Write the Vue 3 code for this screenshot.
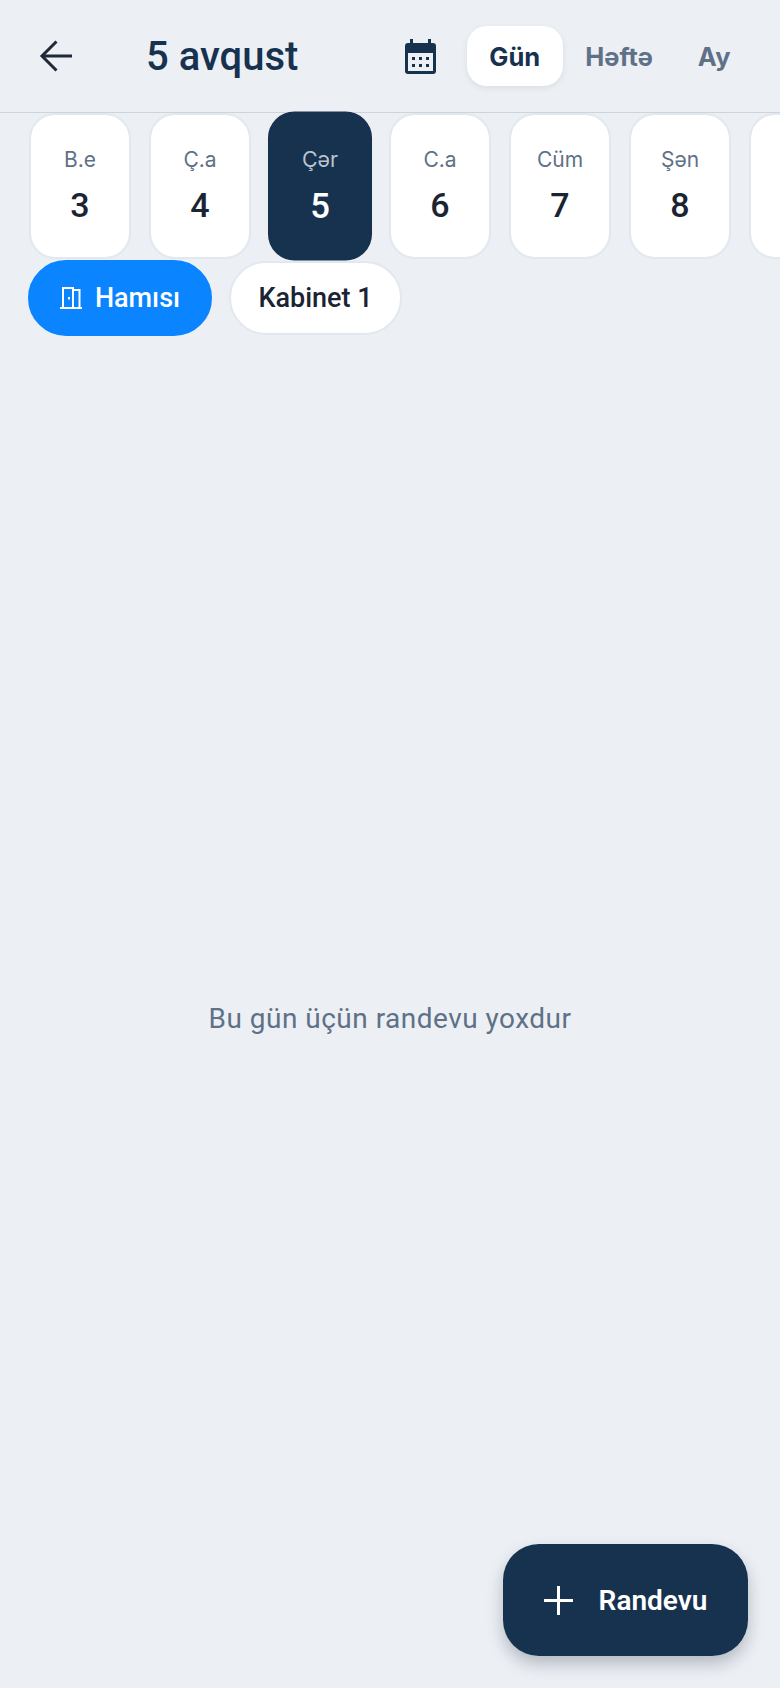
<script setup>
const days = [
  { label: 'B.e', num: 3 },
  { label: 'Ç.a', num: 4 },
  { label: 'Çər', num: 5, active: true },
  { label: 'C.a', num: 6 },
  { label: 'Cüm', num: 7 },
  { label: 'Şən', num: 8 },
  { label: '', num: '' }
]
</script>

<template>
  <div class="page">
    <header class="header">
      <button class="back" aria-label="Geri">
        <svg width="40" height="40" viewBox="0 0 40 40" fill="none" stroke="#1f2937" stroke-width="3">
          <path d="M36 20H6" />
          <path d="M20.500 5.500L6 20l14.500 14.500" />
        </svg>
      </button>
      <h1 class="title">5 avqust</h1>
      <svg class="cal" width="31" height="35" viewBox="0 0 31 35">
        <rect x="0" y="4" width="31" height="31" rx="3" fill="#17324f" />
        <rect x="5" y="0" width="3" height="6" fill="#17324f" />
        <rect x="23" y="0" width="3" height="6" fill="#17324f" />
        <rect x="3" y="14" width="25" height="18" fill="#ecf0f5" />
        <g fill="#17324f">
          <rect x="7" y="18" width="3" height="3" />
          <rect x="14" y="18" width="3" height="3" />
          <rect x="21" y="18" width="3" height="3" />
          <rect x="7" y="25" width="3" height="3" />
          <rect x="14" y="25" width="3" height="3" />
          <rect x="21" y="25" width="3" height="3" />
        </g>
      </svg>
      <nav class="tabs">
        <span class="tab tab-on">Gün</span>
        <span class="tab">Həftə</span>
        <span class="tab">Ay</span>
      </nav>
    </header>

    <div class="days">
      <div v-for="(d, i) in days" :key="i" class="day" :class="{ 'day-on': d.active }">
        <template v-if="d.label">
          <span class="day-label">{{ d.label }}</span>
          <span class="day-num">{{ d.num }}</span>
        </template>
      </div>
    </div>

    <div class="chips">
      <span class="chip chip-on">
        <svg width="22" height="22" viewBox="0 0 22 22" fill="none" stroke="#fff" stroke-width="2">
          <path d="M0 21h22" />
          <path d="M3 21V1h10v20" />
          <path d="M13 3h6.500v18" />
          <path d="M9 10v2.500" />
        </svg>
        <span>Hamısı</span>
      </span>
      <span class="chip">Kabinet 1</span>
    </div>

    <main class="empty">Bu gün üçün randevu yoxdur</main>

    <button class="fab">
      <svg width="29" height="29" viewBox="0 0 29 29" stroke="#fff" stroke-width="3" fill="none">
        <path d="M14.500 0v29M0 14.500h29" />
      </svg>
      <span>Randevu</span>
    </button>
  </div>
</template>

<style scoped>
.page {
  position: relative;
  width: 780px;
  height: 1688px;
  overflow: hidden;
  display: flex;
  flex-direction: column;
  background: #ecf0f5;
  font-family: Roboto, "Noto Sans", sans-serif;
}
.header {
  height: 113px;
  box-sizing: border-box;
  flex: none;
  display: flex;
  align-items: center;
  padding: 0 27px 0 36px;
  border-bottom: 1px solid #cfd4da;
}
.back {
  width: 40px;
  height: 40px;
  padding: 0;
  border: 0;
  background: none;
  display: flex;
}
.title {
  margin: 0 0 0 70px;
  font-size: 40px;
  font-weight: 500;
  color: #17324f;
  flex: 1;
}
.cal {
  margin-right: 31px;
}
.tabs {
  display: flex;
  align-items: center;
}
.tab {
  height: 60px;
  display: flex;
  align-items: center;
  padding: 0 22.500px;
  border-radius: 20px;
  font-family: Inter, sans-serif;
  font-size: 25.500px;
  font-weight: 700;
  color: #5f7186;
}
.tab-on {
  background: #fff;
  color: #17324f;
  box-shadow: 0 2px 6px rgba(15, 23, 42, 0.08);
}
.days {
  flex: none;
  display: flex;
  gap: 18px;
  padding: 0 29px;
}
.day {
  flex: none;
  width: 102px;
  height: 146px;
  box-sizing: border-box;
  border: 2px solid #e2e8f0;
  border-radius: 26px;
  background: #fff;
  display: flex;
  flex-direction: column;
  align-items: center;
  justify-content: center;
  gap: 12px;
}
.day-on {
  background: #17324f;
  border-color: #17324f;
  transform: scale(1.02);
}
.day-label {
  font-family: Inter, sans-serif;
  font-size: 21px;
  line-height: 26px;
  color: #5f7186;
}
.day-on .day-label {
  color: #b9c4d0;
}
.day-num {
  font-size: 34px;
  line-height: 40px;
  font-weight: 500;
  color: #1a2433;
}
.day-on .day-num {
  color: #fff;
}
.chips {
  flex: none;
  height: 76px;
  margin-top: 1px;
  display: flex;
  align-items: center;
  gap: 17px;
  padding: 0 28px;
}
.chip {
  height: 74px;
  width: 173px;
  box-sizing: border-box;
  border: 2px solid #e2e8f0;
  border-radius: 38px;
  background: #fff;
  display: flex;
  align-items: center;
  justify-content: center;
  font-size: 27px;
  font-weight: 500;
  color: #1a2433;
}
.chip-on {
  width: 184px;
  height: 76px;
  gap: 13px;
  background: #0a84ff;
  border-color: #0a84ff;
  color: #fff;
}
.empty {
  flex: 1;
  display: flex;
  align-items: center;
  justify-content: center;
  padding-top: 12px;
  font-size: 28px;
  letter-spacing: 0.480px;
  color: #5f7186;
}
.fab {
  position: absolute;
  right: 32px;
  bottom: 32px;
  width: 245px;
  height: 112px;
  border: 0;
  border-radius: 36px;
  background: #17324f;
  box-shadow: 0 8px 16px rgba(15, 23, 42, 0.25);
  display: flex;
  align-items: center;
  justify-content: center;
  gap: 26px;
  font-family: Roboto, sans-serif;
  font-size: 28px;
  font-weight: 600;
  color: #fff;
}
</style>
